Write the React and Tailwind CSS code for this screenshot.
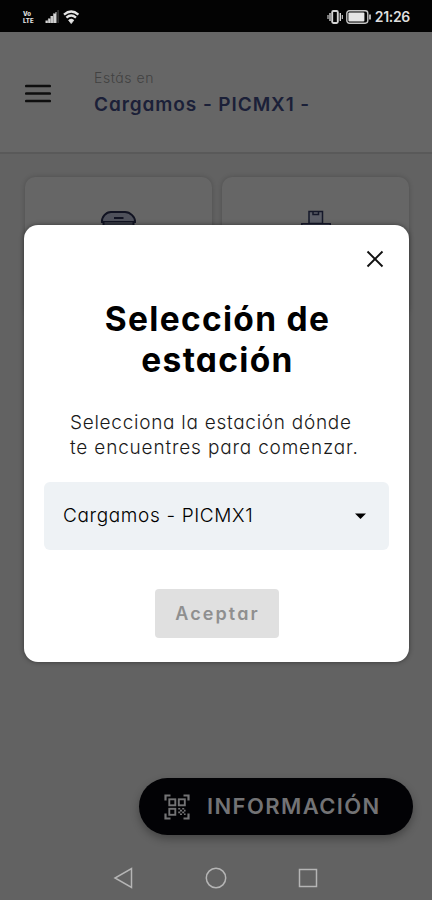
import { useState } from "react";

// Signal, wifi and network type on the left of the status bar
function StatusLeft() {
  return (
    <div className="flex items-center">
      <div className="w-[14px] text-[6px] leading-[7.500px] font-extrabold">
        <div>Vo</div>
        <div>LTE</div>
      </div>
      <svg className="ml-[8px]" width="15" height="14" viewBox="0 0 15 14" fill="#d4d4d4">
        <path d="M0.500 13V10.500H3V8.500H5.500V6H8V3.500H10.500V2H11.500V13Z" />
        <path d="M3 9v4M5.700 7v6M8.300 4v9" stroke="#555" strokeWidth="0.5" />
        <rect x="12.500" y="0" width="1.2" height="13" fill="#444" />
      </svg>
      <svg className="ml-[3px]" width="17" height="15" viewBox="0 0 17 15" fill="none" stroke="#e5e5e5" strokeWidth="2.300">
        <path d="M1 4.6Q8.2 -1.6 15.4 4.6" />
        <path d="M3.4 7.6Q8.2 3.4 13 7.6" />
        <path d="M5.6 10.2Q8.2 8 10.8 10.2L8.2 13.6Z" fill="#e5e5e5" strokeWidth="0.8" />
      </svg>
    </div>
  );
}

function StatusRight() {
  return (
    <div className="flex items-center">
      <svg width="17" height="14" viewBox="0 0 17 14" fill="none" stroke="#d4d4d4">
        <rect x="5.2" y="1" width="5.6" height="12" rx="1.2" strokeWidth="1.900" />
        <path d="M3 3v8M13.300 3v8" strokeWidth="1.400" />
        <path d="M1 5v4M15.300 5v4" strokeWidth="1.1" />
      </svg>
      <svg className="ml-[2px]" width="26" height="14" viewBox="0 0 26 14" fill="none">
        <rect x="0.8" y="0.8" width="21" height="12.4" rx="2.6" stroke="#c4c4c4" strokeWidth="1.4" />
        <rect x="2.4" y="2.4" width="16" height="9.2" rx="1" fill="#e5e5e5" />
        <path d="M24 4.4v5.2" stroke="#c4c4c4" strokeWidth="1.8" />
      </svg>
      <span className="ml-[3px] text-[14px] leading-none font-semibold tracking-[-0.3px] text-[#dedede]">
        21:26
      </span>
    </div>
  );
}

function QrIcon() {
  return (
    <svg width="26" height="26" viewBox="0 0 26 26" fill="none" stroke="#737375" strokeWidth="2.200">
      <path d="M1.5 6.5V1.5H6.5M19.5 1.5H24.5V6.5M24.5 19.5V24.5H19.5M6.5 24.5H1.5V19.5" />
      <rect x="5.3" y="5.3" width="6" height="6" strokeWidth="1.900" />
      <rect x="14.8" y="5.3" width="6" height="6" strokeWidth="1.900" />
      <rect x="5.3" y="14.8" width="6" height="6" strokeWidth="1.900" />
      <path
        d="M14.2 14.8h2m2 0h2M16 16.6h2m2 0h1.6M14.2 18.4h2m2 0h2M16 20.2h2m2 0h1.6"
        strokeWidth="1.6"
      />
    </svg>
  );
}

function TruckIcon() {
  return (
    <svg width="42" height="26" viewBox="0 0 42 26" fill="none" stroke="#111322" strokeWidth="2">
      <path d="M4 12C3.500 7 8 2 13 2H27C32 2 37.500 7 37 12Z" fill="#4f515b" />
      <path d="M5.500 12v11h30V12" fill="#33353f" />
      <path d="M16 8H25.500" />
    </svg>
  );
}

function BoxIcon() {
  return (
    <svg width="30" height="26" viewBox="0 0 30 26" fill="none" stroke="#15182a" strokeWidth="1.500">
      <rect x="8" y="1.500" width="13.500" height="12" fill="#5b5d67" />
      <path d="M12 2v2.500h5.500V2" />
      <rect x="0.800" y="13.800" width="28.500" height="11" fill="#5b5d67" />
    </svg>
  );
}

function StationDialog({ onClose }) {
  const [station] = useState("Cargamos - PICMX1");

  return (
    <div className="absolute top-[225px] left-[24px] flex h-[437px] w-[385px] flex-col items-center rounded-[14px] bg-white shadow-[0_0_5px_rgba(0,0,0,0.45)]">
      <button onClick={onClose} className="mt-[25px] mr-[25px] self-end">
        <svg width="18" height="18" viewBox="0 0 18 18" fill="none" stroke="#111" strokeWidth="1.900">
          <path d="M1.500 1.500L16.500 16.500M16.500 1.500L1.500 16.500" />
        </svg>
      </button>
      <h2 className="mt-[31px] pl-[2px] text-center text-[33.500px] leading-[41px] font-bold tracking-[1.300px] text-black">
        Selección de
        <br />
        estación
      </h2>
      <p className="mt-[30px] w-[293px] text-[19px] leading-[24.500px] font-light whitespace-nowrap text-[#1a1a1a]">
        <span className="tracking-[0.720px]">Selecciona la estación dónde</span>
        <br />
        <span className="tracking-[0.820px]">te encuentres para comenzar.</span>
      </p>
      <div className="mt-[22px] flex h-[68px] w-[345px] items-center justify-between rounded-md bg-[#eef2f5] pr-[23px] pl-[19px]">
        <span className="text-[19px] font-light tracking-[0.640px] text-black">{station}</span>
        <svg width="11" height="6" viewBox="0 0 11 6" fill="#000">
          <path d="M0 0.500H11L5.500 6Z" />
        </svg>
      </div>
      <button className="mt-[39px] h-[49px] w-[124px] rounded bg-[#e0e0e0] pl-[2px] text-[18px] font-semibold tracking-[2.100px] text-[#8f8f8f]">
        Aceptar
      </button>
    </div>
  );
}

export default function App() {
  const [open, setOpen] = useState(true);

  return (
    <div className="relative flex h-[900px] w-[432px] flex-col overflow-hidden bg-[#626262] font-['Inter',sans-serif] [font-feature-settings:'cv11']">
      <div className="flex h-[32px] items-center justify-between bg-[#030303] pt-[2px] pr-[22px] pl-[23px] text-[#e5e5e5]">
        <StatusLeft />
        <StatusRight />
      </div>

      <header className="flex h-[122px] items-center border-b-2 border-[#595959] bg-[#666666] pt-[2px] pl-[25px]">
        <svg width="26" height="19" viewBox="0 0 26 19" stroke="#0e0e0e" strokeWidth="2.700" strokeLinecap="round">
          <path d="M1.300 2H24.700M1.300 9.500H24.700M1.300 17H24.700" />
        </svg>
        <div className="ml-[43px] whitespace-nowrap">
          <div className="text-[14px] leading-[20px] font-light tracking-[0.550px] text-[#414141]">Estás en</div>
          <div className="mt-[4px] text-[19px] leading-[26px] font-semibold tracking-[0.920px] text-[#1b2038]">
            Cargamos - PICMX1 -
          </div>
        </div>
      </header>

      <main className="flex flex-1 flex-col">
        <div className="flex gap-[10px] pt-[23px] pl-[25px]">
          <div className="flex h-[140px] w-[187px] justify-center rounded-[10px] bg-[#666666] pt-[33px] shadow-[0_0_5px_rgba(0,0,0,0.2)]">
            <TruckIcon />
          </div>
          <div className="flex h-[140px] w-[187px] justify-center rounded-[10px] bg-[#666666] pt-[33px] shadow-[0_0_5px_rgba(0,0,0,0.2)]">
            <BoxIcon />
          </div>
        </div>
        <button className="mt-auto mr-[19px] mb-[20px] flex h-[57px] w-[274px] items-center self-end rounded-full bg-[#020205] pl-[25px] text-[#737375] shadow-[0_4px_8px_rgba(0,0,0,0.3)]">
          <QrIcon />
          <span className="ml-[17px] text-[22px] font-semibold tracking-[1.400px]">INFORMACIÓN</span>
        </button>
      </main>

      <nav className="flex h-[45px] items-center justify-center gap-[71px] pr-[1px]">
        <svg width="21" height="22" viewBox="0 0 21 22" fill="none" stroke="#b5b5b5" strokeWidth="1.500">
          <path d="M18.500 1.500V20.500L2 11Z" />
        </svg>
        <svg width="22" height="22" viewBox="0 0 22 22" fill="none" stroke="#b5b5b5" strokeWidth="1.500">
          <circle cx="11" cy="11" r="9.700" />
        </svg>
        <svg width="20" height="20" viewBox="0 0 20 20" fill="none" stroke="#b5b5b5" strokeWidth="1.500">
          <rect x="1.500" y="1.500" width="17" height="17" />
        </svg>
      </nav>

      {open && <StationDialog onClose={() => setOpen(false)} />}
    </div>
  );
}
